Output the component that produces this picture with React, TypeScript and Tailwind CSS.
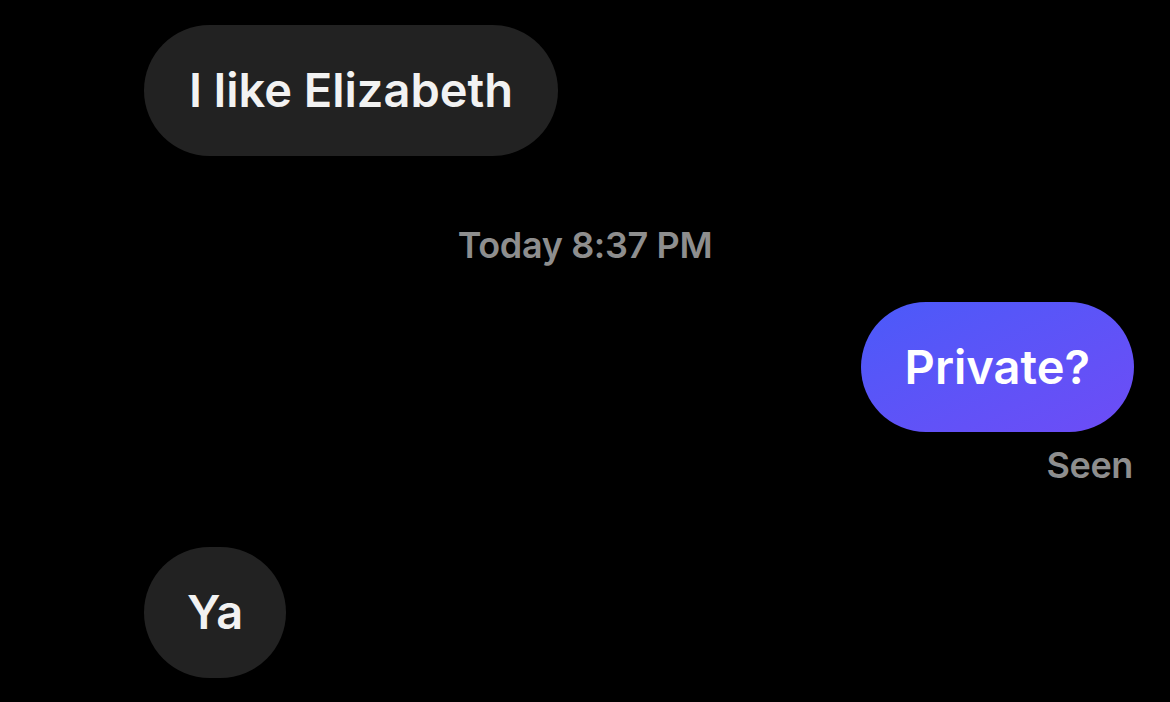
export default function App() {
  return (
    <div
      className="flex min-h-[702px] w-[1170px] flex-col bg-black pt-[25px] text-white"
      style={{ fontFamily: "Inter, 'Noto Sans', sans-serif" }}
    >
      <div className="ml-[144px] flex h-[131px] items-center self-start rounded-full bg-[#222222] px-[45px] text-[47px] font-semibold text-[#f2f2f2]">
        I like Elizabeth
      </div>

      <div className="mt-[67px] self-center text-[36px] font-semibold leading-[44px] tracking-[-0.01em] text-[#8e8e8e]">
        Today 8:37 PM
      </div>

      <div className="mr-[36px] mt-[35px] flex h-[130px] items-center self-end rounded-full bg-gradient-to-br from-[#4a5af9] to-[#6d4cf6] px-[44px] text-[47px] font-semibold">
        Private?
      </div>

      <div className="mr-[37px] mt-[13px] self-end text-[36px] font-semibold leading-[40px] tracking-[-0.01em] text-[#8e8e8e]">
        Seen
      </div>

      <div className="ml-[144px] mt-[62px] flex h-[131px] items-center self-start rounded-full bg-[#222222] px-[43px] text-[47px] font-semibold text-[#f2f2f2]">
        Ya
      </div>
    </div>
  );
}
